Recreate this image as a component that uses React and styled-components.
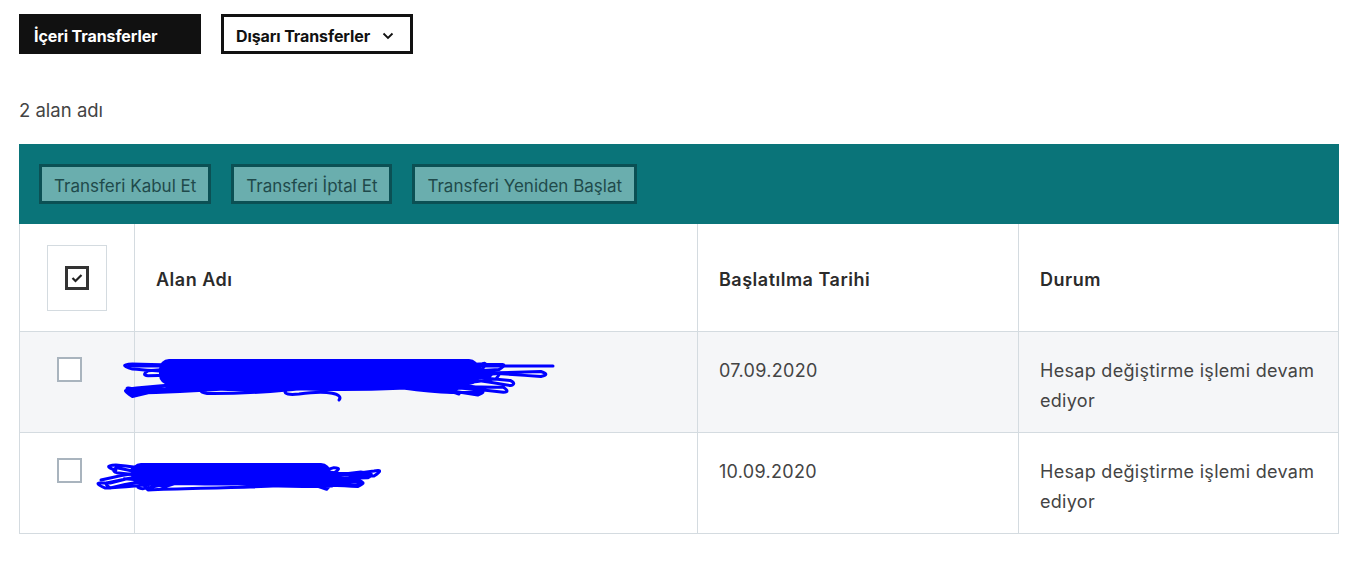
import React from "react";
import styled, { createGlobalStyle } from "styled-components";

const Global = createGlobalStyle`
  html, body { margin: 0; padding: 0; background: #fff; }
  body { font-family: Inter, "Noto Sans", Roboto, sans-serif; color: #2b2b2b; }
  * { box-sizing: border-box; }
`;

const Page = styled.div`
  padding: 14px 23px 0 19px;
`;

const Tabs = styled.div`
  display: flex;
  gap: 20px;
`;

const Tab = styled.button`
  height: 40px;
  display: inline-flex;
  align-items: center;
  gap: 12px;
  padding: 3px ${(p) => (p.$active ? "15px" : "12px")} 0;
  width: ${(p) => p.$w}px;
  font-family: inherit;
  font-size: 16px;
  font-weight: 700;
  letter-spacing: -0.1px;
  background: ${(p) => (p.$active ? "#111111" : "#ffffff")};
  color: ${(p) => (p.$active ? "#ffffff" : "#111111")};
  border: ${(p) => (p.$active ? "none" : "3px solid #111111")};
  cursor: pointer;
`;

const Count = styled.div`
  margin-top: 45px;
  font-size: 18.5px;
  color: #444444;
  line-height: 22px;
`;

const Toolbar = styled.div`
  margin-top: 23px;
  background: #0a7479;
  height: 80px;
  padding: 20px 20px 0;
  display: flex;
  gap: 20px;
  align-items: flex-start;
`;

const ActionButton = styled.button`
  height: 40px;
  padding: 3px 12px 0;
  background: #6aaeae;
  border: 3px solid #0b5054;
  color: #1f4a4b;
  font-family: inherit;
  font-size: 17px;
  cursor: pointer;
`;

const Table = styled.div`
  display: grid;
  grid-template-columns: 115px 563px 321px 320px;
  border-left: 1px solid #d4dbe0;
`;

const Cell = styled.div`
  position: relative;
  border-right: 1px solid #d4dbe0;
  border-bottom: 1px solid #d4dbe0;
  background: ${(p) => (p.$shaded ? "#f5f6f8" : "#ffffff")};
  padding: ${(p) => (p.$head ? "4px 21px 0" : "24px 21px 16px")};
  height: ${(p) => (p.$head ? "108px" : "101px")};
  display: flex;
  align-items: ${(p) => (p.$head ? "center" : "flex-start")};
  font-size: 18px;
  font-weight: ${(p) => (p.$head ? 600 : 400)};
  letter-spacing: ${(p) => (p.$head ? "0.5px" : "0.3px")};
  line-height: 30px;
  color: ${(p) => (p.$head ? "#2b2b2b" : "#444444")};
`;

const CheckCell = styled(Cell)`
  padding: ${(p) => (p.$head ? "0 0 0 27px" : "25px 0 0 37px")};
`;

const HeadCheckFrame = styled.div`
  width: 60px;
  height: 66px;
  border: 1px solid #d4dbe0;
  display: flex;
  align-items: center;
  justify-content: center;
`;

const HeadCheck = styled.div`
  width: 24px;
  height: 24px;
  border: 3px solid #333333;
  display: flex;
  align-items: center;
  justify-content: center;
`;

const RowCheck = styled.div`
  width: 25px;
  height: 25px;
  border: 2px solid #a9b4be;
  background: #fff;
`;

const ScribbleSvg = styled.svg`
  position: absolute;
  pointer-events: none;
  overflow: visible;
`;

function buildScribble(w, h, seed, passes) {
  let s = seed;
  const rnd = () => {
    s = (s * 9301 + 49297) % 233280;
    return s / 233280;
  };
  let x = w * rnd() * 0.1;
  let y = h * (0.3 + rnd() * 0.4);
  let d = `M${x.toFixed(1)} ${y.toFixed(1)}`;
  let dir = 1;
  for (let i = 0; i < passes; i++) {
    const nx = dir > 0 ? w * (0.7 + rnd() * 0.3) : w * (rnd() * 0.25);
    const ny = h * (0.2 + rnd() * 0.6);
    const cy1 = h * (0.1 + rnd() * 0.8);
    const cy2 = h * (0.1 + rnd() * 0.8);
    const cx1 = x + (nx - x) * 0.33;
    const cx2 = x + (nx - x) * 0.66;
    const lx = nx + dir * (6 + rnd() * 10);
    const ly = ny + (rnd() - 0.5) * 10;
    d += ` C${cx1.toFixed(1)} ${cy1.toFixed(1)} ${cx2.toFixed(1)} ${cy2.toFixed(1)} ${nx.toFixed(1)} ${ny.toFixed(1)}`;
    d += ` Q${lx.toFixed(1)} ${ly.toFixed(1)} ${nx.toFixed(1)} ${(ny + 5).toFixed(1)}`;
    x = nx;
    y = ny + 5;
    dir = -dir;
  }
  return d;
}

function Scribble({ left, top, w, h, seed, passes, tail, core }) {
  const d = buildScribble(w, h, seed, passes);
  return (
    <ScribbleSvg style={{ left, top }} width={w} height={h} viewBox={`0 0 ${w} ${h}`}>
      <g fill="none" stroke="#0000ff" strokeLinecap="round" strokeLinejoin="round">
        <rect x={core[0]} y={core[1]} width={core[2]} height={core[3]} rx="10" fill="#0000ff" stroke="none" />
        <path d={d} strokeWidth="3" />
        {tail}
      </g>
    </ScribbleSvg>
  );
}

const Chevron = () => (
  <svg width="12" height="8" viewBox="0 0 12 8">
    <path d="M1.5 1.5 L6 6 L10.5 1.5" fill="none" stroke="#111" strokeWidth="1.8" />
  </svg>
);

const CheckMark = () => (
  <svg width="12" height="10" viewBox="0 0 12 10">
    <path d="M1.5 5 L4.5 8 L10.5 2" fill="none" stroke="#222" strokeWidth="2.2" />
  </svg>
);

const rows = [
  {
    date: "07.09.2020",
    shaded: true,
    scribble: {
      left: -6,
      top: 22,
      w: 424,
      h: 48,
      seed: 17,
      passes: 30,
      core: [30, 5, 320, 26],
      tail: (
        <>
          <path d="M0 12 L424 12" strokeWidth="3" />
          <path d="M180 25 C150 36 150 42 170 40 C200 36 215 40 210 46" strokeWidth="3" />
          <path d="M240 28 C280 32 320 36 330 40" strokeWidth="3" />
        </>
      ),
    },
  },
  {
    date: "10.09.2020",
    shaded: false,
    scribble: {
      left: -34,
      top: 25,
      w: 278,
      h: 34,
      seed: 91,
      passes: 26,
      core: [30, 5, 200, 22],
      tail: <path d="M0 22 C30 14 60 12 90 13" strokeWidth="3" />,
    },
  },
];

export default function App() {
  return (
    <>
      <Global />
      <Page>
        <Tabs>
          <Tab $active $w={182}>İçeri Transferler</Tab>
          <Tab $w={192}>
            Dışarı Transferler <Chevron />
          </Tab>
        </Tabs>
        <Count>2 alan adı</Count>
        <Toolbar>
          <ActionButton>Transferi Kabul Et</ActionButton>
          <ActionButton>Transferi İptal Et</ActionButton>
          <ActionButton>Transferi Yeniden Başlat</ActionButton>
        </Toolbar>
        <Table>
          <CheckCell $head>
            <HeadCheckFrame>
              <HeadCheck>
                <CheckMark />
              </HeadCheck>
            </HeadCheckFrame>
          </CheckCell>
          <Cell $head>Alan Adı</Cell>
          <Cell $head>Başlatılma Tarihi</Cell>
          <Cell $head>Durum</Cell>
          {rows.map((r, i) => (
            <React.Fragment key={i}>
              <CheckCell $shaded={r.shaded}>
                <RowCheck />
              </CheckCell>
              <Cell $shaded={r.shaded}>
                <Scribble {...r.scribble} />
              </Cell>
              <Cell $shaded={r.shaded}>{r.date}</Cell>
              <Cell $shaded={r.shaded}>Hesap değiştirme işlemi devam ediyor</Cell>
            </React.Fragment>
          ))}
        </Table>
      </Page>
    </>
  );
}
